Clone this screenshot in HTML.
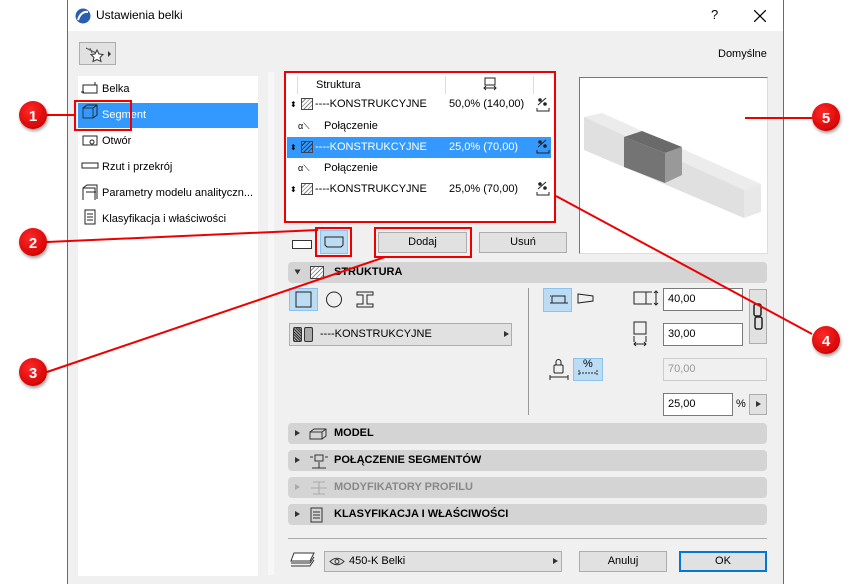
<!DOCTYPE html>
<html><head><meta charset="utf-8"><style>
*{margin:0;padding:0;box-sizing:border-box}
body{width:857px;height:584px;background:#fff;position:relative;overflow:hidden;font-family:"Liberation Sans",sans-serif;font-size:11px;color:#000}
.a{position:absolute}
.win{left:67px;top:0;width:717px;height:584px;background:#f0f0f0;border-left:1px solid #2b79c9;border-right:1px solid #2b79c9}
.title{left:68px;top:0;width:715px;height:31px;background:#fff}
.sb{left:78px;top:76px;width:180px;height:500px;background:#fff}
.it{position:absolute;left:78px;width:180px;height:22px;line-height:22px;padding-left:24px}
.btn{position:absolute;background:#e1e1e1;border:1px solid #adadad;text-align:center;line-height:18px}
.inp{position:absolute;background:#fff;border:1px solid #7a7a7a;padding-left:4px;line-height:21px;font-size:11px}
.sec{position:absolute;left:288px;width:479px;height:21px;background:#d4d4d4;border-radius:4px;line-height:21px;font-weight:bold;font-size:11px}
.sec .t{position:absolute;left:46px}
.tri{position:absolute;left:7px;top:7px;width:0;height:0;border-top:3.5px solid transparent;border-bottom:3.5px solid transparent;border-left:5px solid #333}
.sel{position:absolute;background:#bcdcf4;border:1px solid #8cc2ec}
.row{position:absolute;left:287px;width:264px;height:21px;line-height:21px}
.hatch{position:absolute;width:12px;height:12px;border:1px solid #444;background:repeating-linear-gradient(135deg,#fff 0 2px,#888 2px 3px)}
</style></head><body>
<div class="a win"></div>
<div class="a title"></div>
<svg class="a" style="left:75px;top:8px" width="16" height="16"><circle cx="8" cy="8" r="7.5" fill="#2a5fb0"/><path d="M3 12 Q6 3 13 4" stroke="#fff" stroke-width="2" fill="none"/></svg>
<div class="a" style="left:96px;top:8px;font-size:12px">Ustawienia belki</div>
<div class="a" style="left:711px;top:7px;font-size:13px">?</div>
<svg class="a" style="left:754px;top:10px" width="12" height="12"><path d="M0 0L12 12M12 0L0 12" stroke="#000" stroke-width="1.2"/></svg>
<div class="btn" style="left:79px;top:42px;width:37px;height:23px"></div>
<svg class="a" style="left:82px;top:44px" width="32" height="20"><path d="M4 4L14 9M8 4l2 5" stroke="#555" fill="none"/><path d="M15 6l2 4 4 .5-3 3 1 4-4-2-4 2 1-4-3-3 4-.5z" fill="#fff" stroke="#333"/><path d="M26 7l3 3-3 3z" fill="#333"/></svg>
<div class="a" style="left:718px;top:48px">Domyślne</div>

<div class="a sb"></div>
<div class="it" style="top:78px">Belka</div>
<div class="a" style="left:78px;top:103px;width:180px;height:25px;background:#3399ff"></div>
<div class="it" style="top:104px;color:#fff">Segment</div>
<div class="it" style="top:130px">Otwór</div>
<div class="it" style="top:156px">Rzut i przekrój</div>
<div class="it" style="top:182px">Parametry modelu analityczn...</div>
<div class="it" style="top:208px">Klasyfikacja i właściwości</div>
<svg class="a" style="left:80px;top:80px" width="20" height="150" fill="none" stroke="#222">
<rect x="3" y="5" width="14" height="8"/><path d="M1 12h3M15 2v3"/>
<rect x="3" y="28" width="10" height="10" stroke="#333"/><path d="M3 28l4-3h10v10l-4 3M13 28l4-3"/>
<rect x="3" y="56" width="14" height="9"/><circle cx="12" cy="62" r="2"/>
<rect x="2" y="83" width="16" height="5"/>
<path d="M3 120v-12l4-3h10v14M3 108h12v12M6 112h10"/>
<rect x="5" y="130" width="10" height="14"/><path d="M7 134h6M7 137h6M7 140h6"/>
</svg>

<div class="a" style="left:268px;top:72px;width:6px;height:503px;background:#f7f7f7"></div>

<div class="a" style="left:285px;top:72px;width:270px;height:150px;background:#fff"></div>
<div class="a" style="left:297px;top:76px;width:1px;height:18px;background:#ddd"></div>
<div class="a" style="left:445px;top:76px;width:1px;height:18px;background:#ddd"></div>
<div class="a" style="left:533px;top:76px;width:1px;height:18px;background:#ddd"></div>
<div class="a" style="left:316px;top:79px">Struktura</div>
<svg class="a" style="left:483px;top:77px" width="14" height="14" fill="none" stroke="#222"><rect x="2" y="1" width="10" height="7"/><path d="M1 11h12M3 9l-2 2 2 2M11 9l2 2-2 2"/></svg>
<div class="a" style="left:287px;top:137px;width:264px;height:21px;background:#3399ff"></div>
<div class="row" style="top:94px"><span class="a" style="left:3px;font-size:8px">⬍</span><div class="hatch" style="left:14px;top:4px"></div><span class="a" style="left:28px">----KONSTRUKCYJNE</span><span class="a" style="left:162px">50,0% (140,00)</span></div>
<div class="row" style="top:116px"><span class="a" style="left:11px;font-size:9px">α⟍</span><span class="a" style="left:37px">Połączenie</span></div>
<div class="row" style="top:137px;color:#fff"><span class="a" style="left:3px;font-size:8px;color:#000">⬍</span><div class="hatch" style="left:14px;top:4px;background:repeating-linear-gradient(135deg,#3399ff 0 2px,#234 2px 3px)"></div><span class="a" style="left:28px">----KONSTRUKCYJNE</span><span class="a" style="left:162px">25,0% (70,00)</span></div>
<div class="row" style="top:158px"><span class="a" style="left:11px;font-size:9px">α⟍</span><span class="a" style="left:37px">Połączenie</span></div>
<div class="row" style="top:179px"><span class="a" style="left:3px;font-size:8px">⬍</span><div class="hatch" style="left:14px;top:4px"></div><span class="a" style="left:28px">----KONSTRUKCYJNE</span><span class="a" style="left:162px">25,0% (70,00)</span></div>
<svg class="a" style="left:535px;top:96px" width="16" height="104" fill="none" stroke="#222"><g id="g"><path d="M2 12v3h12v-3M3 9l8-7"/><circle cx="5" cy="4" r="1.3" fill="#222"/><circle cx="10" cy="8" r="1.3" fill="#222"/></g><use href="#g" y="42"/><use href="#g" y="84"/></svg>

<div class="a" style="left:579px;top:77px;width:189px;height:177px;background:#fff;border:1px solid #ddd;border-top:1px solid #777;border-left:1px solid #777"></div>
<svg class="a" style="left:0;top:0" width="857" height="584">
<polygon points="584,117 602,113 761,184 744,190" fill="#ececec"/>
<polygon points="584,117 744,190 744,218 584,150" fill="#e0e0e0"/>
<polygon points="744,190 761,184 761,212 744,218" fill="#e8e8e8"/>
<polygon points="624,137 642,131 682,147 665,153" fill="#6a6a6a"/>
<polygon points="624,137 665,153 665,183 624,167" fill="#747474"/>
<polygon points="665,153 682,147 682,175 665,183" fill="#999"/>
</svg>

<svg class="a" style="left:292px;top:240px" width="20" height="9"><rect x=".5" y=".5" width="19" height="8" fill="#fff" stroke="#333"/></svg>
<div class="sel" style="left:320px;top:230px;width:28px;height:24px"></div>
<svg class="a" style="left:324px;top:236px" width="20" height="12" fill="none" stroke="#222"><path d="M1 1h18v8l-2 2H3L1 9z"/></svg>
<div class="btn" style="left:378px;top:232px;width:89px;height:21px">Dodaj</div>
<div class="btn" style="left:479px;top:232px;width:88px;height:21px">Usuń</div>

<div class="sec" style="top:262px"><div class="tri" style="transform:rotate(90deg)"></div><div class="hatch" style="left:22px;top:4px;width:14px;height:13px"></div><span class="t">STRUKTURA</span></div>
<div class="sel" style="left:289px;top:288px;width:29px;height:23px"></div>
<svg class="a" style="left:295px;top:291px" width="90" height="18" fill="none" stroke="#222"><rect x="1" y="1" width="15" height="15"/><circle cx="39" cy="8.5" r="7.5"/><path d="M62 1h16v3h-6v9h6v3H62v-3h6V4h-6z"/></svg>
<div class="btn" style="left:289px;top:323px;width:223px;height:23px;text-align:left;padding-left:30px;line-height:21px">----KONSTRUKCYJNE</div>
<div class="a" style="left:293px;top:327px;width:9px;height:15px;border:1px solid #333;border-radius:2px;background:repeating-linear-gradient(45deg,#333 0 1px,#aaa 1px 2px)"></div>
<div class="a" style="left:304px;top:327px;width:9px;height:15px;border:1px solid #333;border-radius:2px;background:#aaa"></div>
<div class="tri" style="left:504px;top:331px"></div>
<div class="a" style="left:528px;top:288px;width:1px;height:127px;background:#999"></div>
<div class="sel" style="left:543px;top:288px;width:29px;height:24px"></div>
<svg class="a" style="left:549px;top:293px" width="80" height="95" fill="none" stroke="#222"><rect x="3" y="3" width="13" height="7"/><path d="M1 10h18M1 3h1M29 1l15 2v5l-15 2z"/></svg>
<svg class="a" style="left:632px;top:288px" width="30" height="60" fill="none" stroke="#222"><rect x="2" y="4" width="12" height="12"/><path d="M14 4h6M14 16h6M24 3v14M22 5l2-2 2 2M22 15l2 2 2-2"/><rect x="2" y="34" width="12" height="12"/><path d="M2 48v6M14 48v6M2 56h12M4 54l-2 2 2 2M12 54l2 2-2 2"/></svg>
<div class="inp" style="left:663px;top:288px;width:80px;height:23px">40,00</div>
<div class="inp" style="left:663px;top:323px;width:80px;height:23px">30,00</div>
<div class="btn" style="left:749px;top:289px;width:18px;height:55px"></div>
<svg class="a" style="left:752px;top:303px" width="12" height="28" fill="none" stroke="#222" stroke-width="1.5"><rect x="2" y="1" width="7" height="12" rx="2"/><rect x="3" y="14" width="7" height="12" rx="2"/></svg>
<svg class="a" style="left:548px;top:359px" width="22" height="22" fill="none" stroke="#222"><rect x="6" y="6" width="9" height="8" rx="1"/><path d="M8 6V3a2.5 2.5 0 015 0v3M2 16v5M20 16v5M2 18h18"/></svg>
<div class="sel" style="left:573px;top:358px;width:30px;height:23px"></div>
<div class="a" style="left:583px;top:358px;font-size:11px">%</div>
<svg class="a" style="left:578px;top:368px" width="20" height="10" fill="none" stroke="#222"><path d="M1 2v6M19 2v6M1 5h18" stroke-dasharray="2 1"/></svg>
<div class="inp" style="left:663px;top:358px;width:104px;height:23px;border-color:#ccc;background:#f0f0f0;color:#999">70,00</div>
<div class="inp" style="left:663px;top:393px;width:70px;height:23px">25,00</div>
<div class="a" style="left:736px;top:398px">%</div>
<div class="btn" style="left:749px;top:394px;width:18px;height:21px"></div>
<div class="tri" style="left:756px;top:401px"></div>

<div class="sec" style="top:423px"><div class="tri"></div><svg class="a" style="left:20px;top:4px" width="22" height="14" fill="none" stroke="#333"><path d="M2 5h12v7H2zM2 5l4-3h12v7l-4 3M14 5l4-3"/></svg><span class="t">MODEL</span></div>
<div class="sec" style="top:450px"><div class="tri"></div><svg class="a" style="left:20px;top:2px" width="22" height="18" fill="none" stroke="#333"><path d="M4 16h14M11 16V10M7 3h8v6H7zM2 5h3M17 5h3"/></svg><span class="t">POŁĄCZENIE SEGMENTÓW</span></div>
<div class="sec" style="top:477px;color:#888"><div class="tri" style="border-left-color:#aaa"></div><svg class="a" style="left:20px;top:3px" width="22" height="16" fill="none" stroke="#aaa"><path d="M5 2h12M5 14h12M11 2v12M3 8h16"/></svg><span class="t">MODYFIKATORY PROFILU</span></div>
<div class="sec" style="top:504px"><div class="tri"></div><svg class="a" style="left:22px;top:3px" width="14" height="16" fill="none" stroke="#333"><rect x="1" y="1" width="11" height="14"/><path d="M3 5h7M3 8h7M3 11h7"/></svg><span class="t">KLASYFIKACJA I WŁAŚCIWOŚCI</span></div>
<div class="a" style="left:288px;top:538px;width:479px;height:1px;background:#aaa"></div>

<svg class="a" style="left:290px;top:551px" width="26" height="18" fill="none" stroke="#333"><path d="M4 2h20l-4 8H1z" fill="#fff"/><path d="M1 12h19l4-6M1 15h19l4-6"/></svg>
<div class="btn" style="left:324px;top:551px;width:238px;height:21px;text-align:left;padding-left:24px">450-K Belki</div>
<svg class="a" style="left:329px;top:557px" width="16" height="9" fill="none" stroke="#333"><path d="M1 4.5Q8-2 15 4.5Q8 11 1 4.5z"/><circle cx="8" cy="4.5" r="2"/></svg>
<div class="tri" style="left:553px;top:558px"></div>
<div class="btn" style="left:579px;top:551px;width:88px;height:21px">Anuluj</div>
<div class="btn" style="left:679px;top:551px;width:88px;height:21px;border:2px solid #0078d7;line-height:17px">OK</div>

<svg class="a" style="left:0;top:0" width="857" height="584">
<defs><radialGradient id="rg" cx="40%" cy="35%" r="70%"><stop offset="0" stop-color="#ff2a2a"/><stop offset="1" stop-color="#d00000"/></radialGradient><filter id="sh"><feDropShadow dx="1" dy="2" stdDeviation="1.5" flood-opacity=".4"/></filter></defs>
<g fill="none" stroke="#ee0000" stroke-width="2">
<rect x="75" y="101" width="56" height="29"/>
<rect x="285" y="72" width="270" height="150"/>
<rect x="316" y="228" width="35" height="28"/>
<rect x="375" y="228" width="96" height="29"/>
<path d="M47 115H75M47 242L318 230M47 372L385 257M556 196L812 334M745 118H812"/>
</g>
<g filter="url(#sh)" fill="url(#rg)"><circle cx="33" cy="115" r="14"/><circle cx="33" cy="242" r="14"/><circle cx="33" cy="372" r="14"/><circle cx="826" cy="340" r="14"/><circle cx="826" cy="117" r="14"/></g>
<g fill="#fff" font-family="Liberation Sans" font-weight="bold" font-size="15" text-anchor="middle"><text x="33" y="121">1</text><text x="33" y="248">2</text><text x="33" y="378">3</text><text x="826" y="346">4</text><text x="826" y="123">5</text></g>
</svg>
</body></html>
